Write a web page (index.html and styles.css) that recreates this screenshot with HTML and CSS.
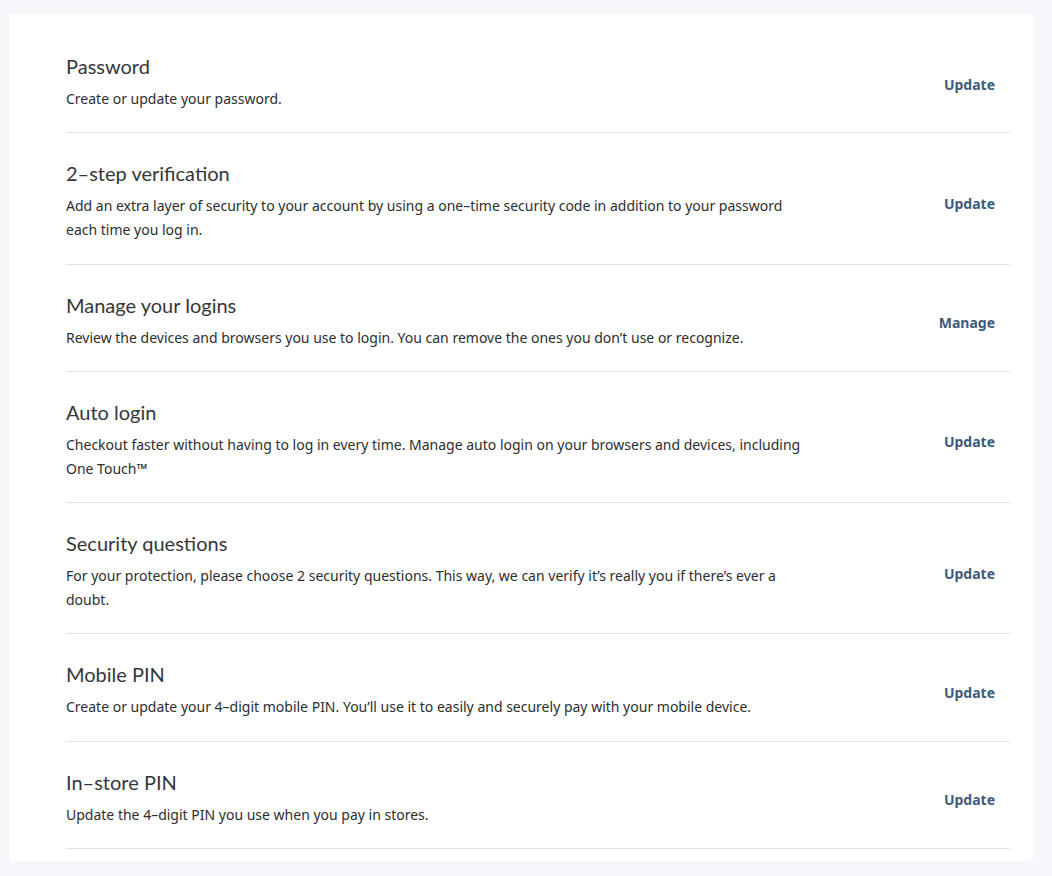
FILE: index.html
```html
<!DOCTYPE html>
<html lang="en">
<head>
<meta charset="utf-8">
<title>Security</title>
<link rel="stylesheet" href="styles.css">
</head>
<body>
<main class="card">
  <section class="row">
    <div class="text">
      <h2 class="title">Password</h2>
      <p class="desc">Create or update your password.</p>
    </div>
    <a class="action" href="#">Update</a>
  </section>
  <section class="row">
    <div class="text">
      <h2 class="title">2–step verification</h2>
      <p class="desc">Add an extra layer of security to your account by using a one–time security code in addition to your password each time you log in.</p>
    </div>
    <a class="action" href="#">Update</a>
  </section>
  <section class="row">
    <div class="text">
      <h2 class="title">Manage your logins</h2>
      <p class="desc">Review the devices and browsers you use to login. You can remove the ones you don’t use or recognize.</p>
    </div>
    <a class="action" href="#">Manage</a>
  </section>
  <section class="row">
    <div class="text">
      <h2 class="title">Auto login</h2>
      <p class="desc">Checkout faster without having to log in every time. Manage auto login on your browsers and devices, including One Touch™</p>
    </div>
    <a class="action" href="#">Update</a>
  </section>
  <section class="row">
    <div class="text">
      <h2 class="title">Security questions</h2>
      <p class="desc">For your protection, please choose 2 security questions. This way, we can verify it’s really you if there’s ever a doubt.</p>
    </div>
    <a class="action" href="#">Update</a>
  </section>
  <section class="row">
    <div class="text">
      <h2 class="title">Mobile PIN</h2>
      <p class="desc">Create or update your 4–digit mobile PIN. You’ll use it to easily and securely pay with your mobile device.</p>
    </div>
    <a class="action" href="#">Update</a>
  </section>
  <section class="row">
    <div class="text">
      <h2 class="title">In–store PIN</h2>
      <p class="desc">Update the 4–digit PIN you use when you pay in stores.</p>
    </div>
    <a class="action" href="#">Update</a>
  </section>
</main>
</body>
</html>
```
FILE: styles.css
```css
* { box-sizing: border-box; }
html, body { margin: 0; height: 100%; }
body {
  background: #f5f7fa;
  padding: 14px 19px 15px 10px;
  font-family: Lato, "Noto Sans", sans-serif;
  color: #2c2e2f;
}
.card {
  background: #ffffff;
  padding: 12px 23px 12px 56px;
  border-radius: 2px;
}
.row {
  display: flex;
  align-items: center;
  justify-content: space-between;
  padding: 26px 15px 21.25px 0;
  border-bottom: 1px solid #e1e3e5;
}
.text { width: 745px; }
.title {
  margin: 0 0 7px;
  font-size: 20px;
  line-height: 28px;
  font-weight: 400;
  color: #34373a;
}
.desc {
  margin: 0;
  font-family: "Noto Sans", sans-serif;
  font-size: 14px;
  line-height: 24px;
  color: #2c2e2f;
}
.action {
  margin-top: 5px;
  font-family: "Noto Sans", sans-serif;
  font-size: 14px;
  font-weight: 700;
  color: #3e5a7a;
  text-decoration: none;
}
```
